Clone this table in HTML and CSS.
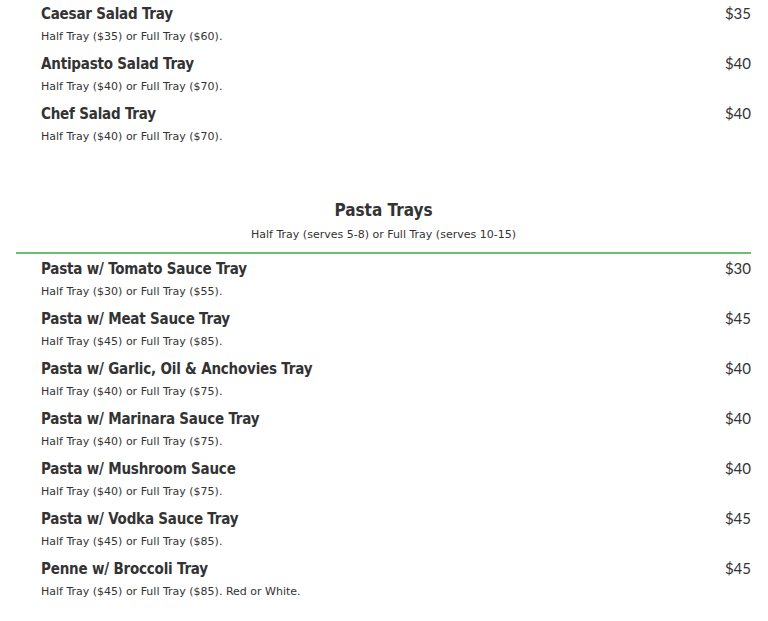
FILE: index.html
```html
<!DOCTYPE html>
<html>
<head>
<meta charset="utf-8">
<link rel="stylesheet" href="styles.css">
</head>
<body>
<div class="menu">
  <section class="section">
    <div class="items">
      <div class="item"><div class="row"><span class="name">Caesar Salad Tray</span><span class="price">$35</span></div><div class="desc">Half Tray ($35) or Full Tray ($60).</div></div>
      <div class="item"><div class="row"><span class="name">Antipasto Salad Tray</span><span class="price">$40</span></div><div class="desc">Half Tray ($40) or Full Tray ($70).</div></div>
      <div class="item"><div class="row"><span class="name">Chef Salad Tray</span><span class="price">$40</span></div><div class="desc">Half Tray ($40) or Full Tray ($70).</div></div>
    </div>
  </section>
  <section class="section pasta">
    <header class="sec-head">
      <h2 class="sec-title">Pasta Trays</h2>
      <p class="sec-sub">Half Tray (serves 5-8) or Full Tray (serves 10-15)</p>
    </header>
    <div class="items">
      <div class="item"><div class="row"><span class="name">Pasta w/ Tomato Sauce Tray</span><span class="price">$30</span></div><div class="desc">Half Tray ($30) or Full Tray ($55).</div></div>
      <div class="item"><div class="row"><span class="name">Pasta w/ Meat Sauce Tray</span><span class="price">$45</span></div><div class="desc">Half Tray ($45) or Full Tray ($85).</div></div>
      <div class="item"><div class="row"><span class="name">Pasta w/ Garlic, Oil &amp; Anchovies Tray</span><span class="price">$40</span></div><div class="desc">Half Tray ($40) or Full Tray ($75).</div></div>
      <div class="item"><div class="row"><span class="name">Pasta w/ Marinara Sauce Tray</span><span class="price">$40</span></div><div class="desc">Half Tray ($40) or Full Tray ($75).</div></div>
      <div class="item"><div class="row"><span class="name">Pasta w/ Mushroom Sauce</span><span class="price">$40</span></div><div class="desc">Half Tray ($40) or Full Tray ($75).</div></div>
      <div class="item"><div class="row"><span class="name">Pasta w/ Vodka Sauce Tray</span><span class="price">$45</span></div><div class="desc">Half Tray ($45) or Full Tray ($85).</div></div>
      <div class="item"><div class="row"><span class="name">Penne w/ Broccoli Tray</span><span class="price">$45</span></div><div class="desc">Half Tray ($45) or Full Tray ($85). Red or White.</div></div>
    </div>
  </section>
</div>
</body>
</html>
```
FILE: styles.css
```css
html, body { margin: 0; padding: 0; background: #fff; }
body {
  color: #333;
  font-family: "DejaVu Sans Condensed", "DejaVu Sans", sans-serif;
}
.menu { width: 735px; margin-left: 16px; }
.section { margin: 0; }
.pasta { margin-top: 48px; }
.sec-head {
  text-align: center;
  border-bottom: 2px solid #6cbf6c;
  padding-bottom: 8px;
}
.sec-title {
  margin: 0;
  font-size: 17px;
  font-weight: bold;
  line-height: 24px;
}
.sec-sub {
  margin: 4px 0 0;
  font-family: "DejaVu Sans", sans-serif;
  font-size: 11px;
  line-height: 18px;
}
.items { padding-left: 25px; }
.pasta .items { padding-top: 1px; }
.item { height: 50px; }
.row {
  display: flex;
  justify-content: space-between;
  align-items: baseline;
  line-height: 26px;
}
.name { font-size: 15px; font-weight: bold; letter-spacing: -0.2px; }
.price { font-family: Lato, sans-serif; font-size: 15px; }
.desc {
  font-family: "DejaVu Sans", sans-serif;
  font-size: 11px;
  line-height: 20px;
}
```
